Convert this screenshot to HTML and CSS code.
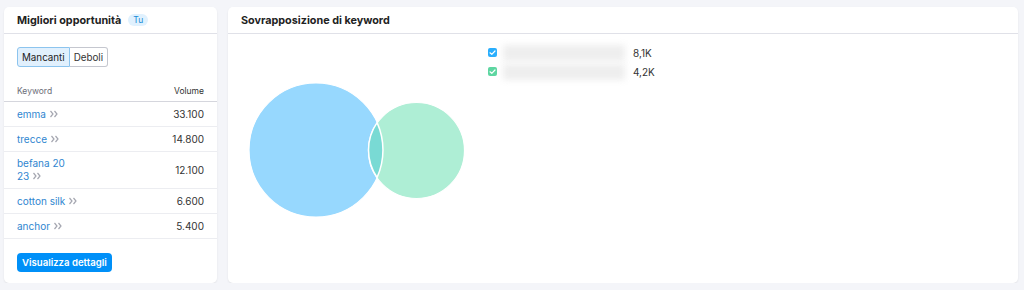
FILE: index.html
```html
<!DOCTYPE html>
<html lang="it">

<head>
    <meta charset="UTF-8">
    <meta name="viewport" content="width=device-width, initial-scale=1.0">
    <title>Keyword gap</title>
    <link rel="stylesheet" href="styles.css">
</head>

<body>
    <div class="dashboard">
        <!-- Migliori opportunita -->
        <div class="card">
            <div class="card-header">
                <h3>Migliori opportunità</h3>
                <span class="badge">Tu</span>
            </div>
            <div class="card-body opps">
                <div class="segmented">
                    <button class="seg active">Mancanti</button>
                    <button class="seg">Deboli</button>
                </div>
                <table class="kw-table">
                    <thead>
                        <tr>
                            <th>Keyword</th>
                            <th class="num">Volume</th>
                        </tr>
                    </thead>
                    <tbody>
                        <tr>
                            <td><a href="#">emma</a><svg class="chev" width="10" height="8" viewBox="0 0 10 8"><path d="M1.5 1 L4 4 L1.5 7 M5.5 1 L8 4 L5.5 7" /></svg></td>
                            <td class="num">33.100</td>
                        </tr>
                        <tr>
                            <td><a href="#">trecce</a><svg class="chev" width="10" height="8" viewBox="0 0 10 8"><path d="M1.5 1 L4 4 L1.5 7 M5.5 1 L8 4 L5.5 7" /></svg></td>
                            <td class="num">14.800</td>
                        </tr>
                        <tr>
                            <td class="two-line"><a href="#">befana 20<br>23</a><svg class="chev" width="10" height="8" viewBox="0 0 10 8"><path d="M1.5 1 L4 4 L1.5 7 M5.5 1 L8 4 L5.5 7" /></svg></td>
                            <td class="num">12.100</td>
                        </tr>
                        <tr>
                            <td><a href="#">cotton silk</a><svg class="chev" width="10" height="8" viewBox="0 0 10 8"><path d="M1.5 1 L4 4 L1.5 7 M5.5 1 L8 4 L5.5 7" /></svg></td>
                            <td class="num">6.600</td>
                        </tr>
                        <tr>
                            <td><a href="#">anchor</a><svg class="chev" width="10" height="8" viewBox="0 0 10 8"><path d="M1.5 1 L4 4 L1.5 7 M5.5 1 L8 4 L5.5 7" /></svg></td>
                            <td class="num">5.400</td>
                        </tr>
                    </tbody>
                </table>
                <button class="btn-primary">Visualizza dettagli</button>
            </div>
        </div>

        <!-- Sovrapposizione -->
        <div class="card">
            <div class="card-header">
                <h3>Sovrapposizione di keyword</h3>
            </div>
            <div class="card-body overlap">
                <svg class="venn" width="236" height="229" viewBox="0 0 236 229">
                    <circle cx="76" cy="107" r="67" fill="#97d8fe" stroke="#fff" stroke-width="1.2" />
                    <circle cx="176.5" cy="107.5" r="48" fill="#aeeed5" stroke="#fff" stroke-width="1.2" />
                    <path d="M137.1 79.6 A67 67 0 0 1 137.1 134.4 A48 48 0 0 1 137.1 79.6 Z" fill="#79dad4"
                        stroke="#fff" stroke-width="1.5" />
                </svg>
                <div class="legend">
                    <div class="legend-row">
                        <span class="check blue">
                            <svg width="9" height="9" viewBox="0 0 9 9"><path d="M2 4.8 L3.8 6.3 L7 3" fill="none" stroke="#fff" stroke-width="1.2" stroke-linecap="round" stroke-linejoin="round"/></svg>
                        </span>
                        <span class="blurred"></span>
                        <span class="value">8,1K</span>
                    </div>
                    <div class="legend-row">
                        <span class="check green">
                            <svg width="9" height="9" viewBox="0 0 9 9"><path d="M2 4.8 L3.8 6.3 L7 3" fill="none" stroke="#fff" stroke-width="1.2" stroke-linecap="round" stroke-linejoin="round"/></svg>
                        </span>
                        <span class="blurred"></span>
                        <span class="value">4,2K</span>
                    </div>
                </div>
            </div>
        </div>
    </div>
</body>

</html>
```
FILE: styles.css
```css
body {
    margin: 0;
    background-color: #f4f5f9;
    font-family: Inter, "Noto Sans", Arial, sans-serif;
    color: #333;
}

.dashboard {
    display: grid;
    grid-template-columns: 213px 790px;
    gap: 11px;
    padding: 7px 0 0 4px;
}

/* Card */
.card {
    height: 276px;
    background-color: #fff;
    border-radius: 5px;
    box-shadow: 0 1px 2px rgba(0, 0, 0, 0.08);
    box-sizing: border-box;
}

.card-header {
    display: flex;
    align-items: center;
    height: 26px;
    padding: 0 13px;
    border-bottom: 1px solid #e0e1e8;
}

.card-header h3 {
    margin: 0;
    font-size: 10.8px;
    font-weight: 700;
    color: #222;
}

.badge {
    margin-left: 7px;
    padding: 1px 5px;
    font-size: 8.5px;
    color: #1a8ad6;
    background-color: #e0f1fe;
    border-radius: 6px;
}

/* Migliori opportunita */
.opps {
    padding: 13px 0 0;
}

.segmented {
    display: flex;
    margin: 0 13px;
}

.seg {
    height: 20px;
    padding: 0 4px;
    font-family: inherit;
    font-size: 9.8px;
    color: #333;
    background-color: #fff;
    border: 1px solid #c5c7cf;
    cursor: pointer;
}

.seg:first-child {
    border-radius: 3px 0 0 3px;
}

.seg:last-child {
    border-left: none;
    border-radius: 0 3px 3px 0;
}

.seg.active {
    color: #222;
    background-color: #e1f0fd;
    border-color: #8cc4ee;
}

.kw-table {
    width: 100%;
    margin-top: 14px;
    border-collapse: collapse;
    font-size: 10px;
}

.kw-table th {
    height: 20px;
    padding: 0 13px;
    font-size: 8.5px;
    font-weight: 400;
    color: #6c6e78;
    text-align: left;
    border-bottom: 1px solid #d5d6dd;
}

.kw-table td {
    padding: 6px 13px;
    line-height: 12px;
    border-bottom: 1px solid #ecedf1;
}

.kw-table td.two-line {
    line-height: 13px;
    padding: 5px 13px;
}

.kw-table .num {
    text-align: right;
    color: #333;
}

.kw-table a {
    color: #2f86d0;
    text-decoration: none;
}

.chev {
    margin-left: 3px;
    fill: none;
    stroke: #a4a6b0;
    stroke-width: 1.2;
}

.btn-primary {
    margin: 14px 13px 0;
    height: 19px;
    padding: 0 5px;
    font-family: inherit;
    font-size: 9.6px;
    font-weight: 600;
    color: #fff;
    background-color: #0090f8;
    border: none;
    border-radius: 4px;
    cursor: pointer;
}

/* Sovrapposizione */
.overlap {
    display: flex;
    gap: 12px;
    padding: 9px 12px;
}

.legend {
    display: flex;
    flex-direction: column;
}

.legend-row {
    display: flex;
    align-items: center;
    height: 19px;
}

.check {
    display: flex;
    align-items: center;
    justify-content: center;
    width: 9px;
    height: 9px;
    border-radius: 2px;
}

.check.blue {
    background-color: #2aaefd;
}

.check.green {
    background-color: #5dd6a1;
}

.blurred {
    width: 122px;
    height: 16px;
    margin: 0 8px 0 6px;
    background-color: #eeeeee;
    filter: blur(3px);
}

.value {
    font-size: 10px;
    color: #333;
}
```
